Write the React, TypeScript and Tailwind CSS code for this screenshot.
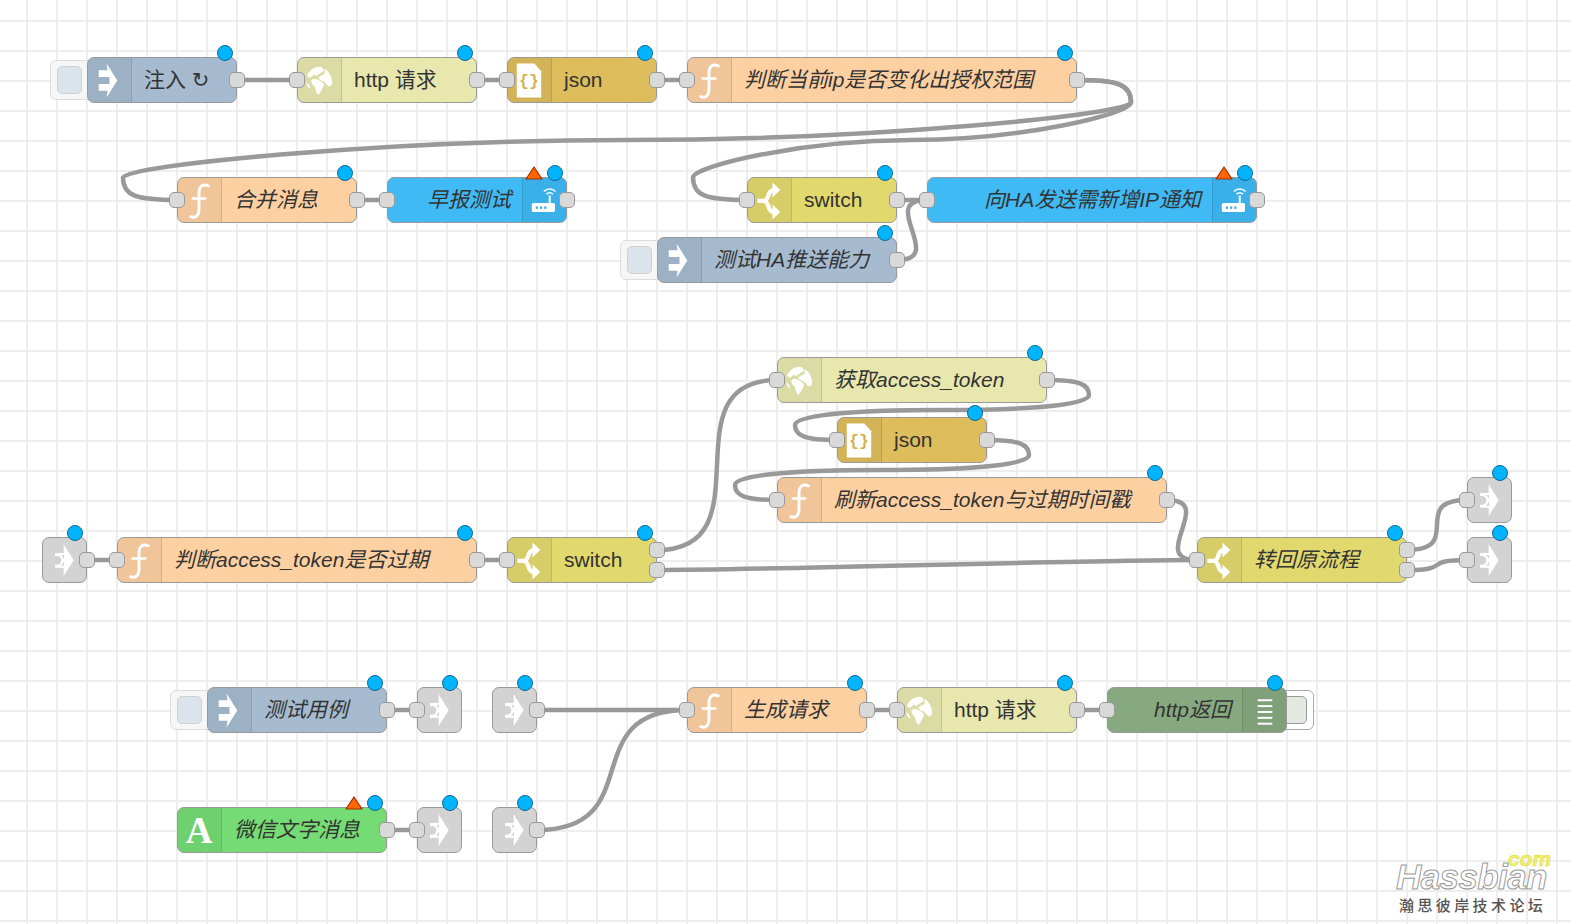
import React from "react";

const FONT = "font-['Liberation_Sans','Noto_Sans_CJK_SC','DejaVu_Sans',sans-serif]";

function wirePath(x1: number, y1: number, x2: number, y2: number) {
  const nw = 150, nh = 45;
  const dy = y2 - y1, dx = x2 - x1;
  const delta = Math.sqrt(dy * dy + dx * dx);
  let scale = 0.75;
  if (dx > 0) {
    if (delta < nw) scale = 0.75 - 0.75 * ((nw - delta) / nw);
    return `M ${x1} ${y1} C ${x1 + nw * scale} ${y1} ${x2 - nw * scale} ${y2} ${x2} ${y2}`;
  }
  scale = 0.4 - 0.2 * Math.max(0, (nw - Math.min(Math.abs(dx), Math.abs(dy))) / nw);
  const midX = Math.floor(x2 - dx / 2);
  const midY = Math.floor(y2 - dy / 2);
  const cp = nh / 2;
  const s = dy > 0 ? 1 : -1;
  const topX = x1 + nw * scale;
  const topY = y1 + s * Math.min(cp, Math.abs(midY - y1) / 2);
  const botX = x2 - nw * scale;
  const botY = y2 - s * Math.min(cp, Math.abs(y2 - midY) / 2);
  const pts = [
    [(x1 + topX) / 2 + (topX - x1) * 0.25, y1],
    [topX, y1 + s * 4],
    [topX, topY],
    [topX, topY + s * Math.min(cp / 2, Math.abs(midY - topY))],
    [(topX + midX) / 2, midY],
    [midX, midY],
    [(botX + midX) / 2, midY],
    [botX, botY - s * Math.min(cp / 2, Math.abs(botY - midY))],
    [botX, botY],
    [botX, y2 - s * 4],
    [(x2 + botX) / 2 + (botX - x2) * 0.25, y2],
    [x2, y2],
  ];
  let d = `M ${x1} ${y1}`;
  for (let i = 0; i < pts.length; i += 3) {
    d += ` C ${pts[i].join(" ")} ${pts[i + 1].join(" ")} ${pts[i + 2].join(" ")}`;
  }
  return d;
}

const WIRES: number[][] = [
  [237, 80, 297, 80],
  [477, 80, 507, 80],
  [657, 80, 687, 80],
  [1077, 80, 177, 200],
  [357, 200, 387, 200],
  [1077, 80, 747, 200],
  [897, 200, 927, 200],
  [897, 260, 927, 200],
  [87, 560, 117, 560],
  [477, 560, 507, 560],
  [657, 550, 777, 380],
  [657, 570, 1197, 560],
  [1047, 380, 837, 440],
  [987, 440, 777, 500],
  [1167, 500, 1197, 560],
  [1407, 550, 1467, 500],
  [1407, 570, 1467, 560],
  [387, 710, 417, 710],
  [537, 710, 687, 710],
  [387, 830, 417, 830],
  [537, 830, 687, 710],
  [867, 710, 897, 710],
  [1077, 710, 1107, 710],
];

const Ico = ({ children, vb = "0 0 45 45" }: { children: React.ReactNode; vb?: string }) => (
  <svg width="45" height="45" viewBox={vb} className="block">
    {children}
  </svg>
);

const InjectIcon = () => (
  <Ico>
    <polygon fill="#fff" points="12,12 21,12 20,5 31,22.5 20,40 21,33 12,33 12,26 23,26 23,19 12,19" />
  </Ico>
);
const FuncIcon = () => (
  <Ico>
    <path d="M14 39 C20 41 22.5 37 22.5 31 L22.5 15 C22.5 8 26 5 32 7.5" fill="none" stroke="#fff" strokeWidth="3" strokeLinecap="round" />
    <path d="M15 20.5 H30" fill="none" stroke="#fff" strokeWidth="2.4" />
  </Ico>
);
const GlobeIcon = () => (
  <Ico vb="6 6 135 135">
    <g fill="#fff" stroke="#fff" strokeWidth="3" strokeLinejoin="round">
      <path d="M38 60 C42 45 58 32 78 33 C84 34 88 38 86 44 C80 46 76 52 70 54 C66 60 62 58 60 54 C54 56 50 60 46 64 Z" />
      <path d="M92 40 C104 48 114 66 112 84 C110 90 104 92 100 88 C94 80 90 74 80 72 C76 70 72 68 74 64 C80 58 90 58 92 52 Z" />
      <path d="M52 72 C60 68 70 72 76 76 C84 80 90 84 86 92 C82 98 78 108 72 116 C66 112 64 100 62 92 C56 88 50 82 52 72 Z" />
      <path d="M36 82 L40 84 L46 96 L42 94 Z" />
    </g>
  </Ico>
);
const SwitchIcon = () => (
  <Ico vb="6 6 135 135">
    <g fill="none" stroke="#fff" strokeWidth="13">
      <path d="M38 75 H56 C68 75 70 64 73 54 C76 44 82 41 94 41" />
      <path d="M56 75 C68 75 70 86 73 96 C76 106 82 109 94 109" />
    </g>
    <polygon fill="#fff" points="84,18 108,41 84,64" />
    <polygon fill="#fff" points="84,86 108,109 84,132" />
  </Ico>
);
const JsonIcon = () => (
  <Ico>
    <polygon fill="#fff" points="10,5 28,5 35,13 35,40 10,40" />
    <text x="22.5" y="28" textAnchor="middle" fontSize="17" fontWeight="700" fill="#d4b04e" fontFamily="'Liberation Mono',monospace">{"{}"}</text>
  </Ico>
);
const RouterIcon = () => (
  <Ico vb="21 36 135 135">
    <rect x="48" y="111" width="71" height="28" rx="5" fill="#fff" />
    <rect x="100" y="88" width="6" height="26" fill="#fff" />
    <g fill="#3fa9e0">
      <rect x="60" y="122" width="7" height="7" />
      <rect x="73" y="122" width="7" height="7" />
      <rect x="86" y="122" width="7" height="7" />
    </g>
    <g fill="none" stroke="#fff" strokeWidth="4.5">
      <path d="M93 84 A14 14 0 0 1 113 84" />
      <path d="M85 76 A25 25 0 0 1 121 76" />
    </g>
  </Ico>
);
const DebugIcon = () => (
  <Ico>
    <g fill="#fff">
      <rect x="15" y="11" width="15" height="2" />
      <rect x="15" y="17" width="15" height="2" />
      <rect x="15" y="23" width="15" height="2" />
      <rect x="15" y="29" width="15" height="2" />
      <rect x="15" y="35" width="15" height="2" />
    </g>
  </Ico>
);
const LinkIcon = () => (
  <Ico vb="6 51 135 135">
    <polygon fill="#fff" points="42,96 68,96 68,70 98,118 68,165 68,140 42,140" />
    <path d="M42 105 H48 A13 13 0 0 1 48 131 H42 Z" fill="#d3d3d3" />
    <path d="M60 102 Q66 106 67 112 L69 112 L69 102 Z" fill="#d3d3d3" />
    <path d="M60 134 Q66 130 67 124 L69 124 L69 134 Z" fill="#d3d3d3" />
  </Ico>
);
const TextIcon = () => (
  <span className="font-['Liberation_Serif',serif] font-bold text-[37px] leading-[45px] text-white block w-[45px] text-center">A</span>
);

type NodeDef = {
  x: number;
  y: number;
  w: number;
  bg: string;
  label?: string;
  italic?: boolean;
  icon: React.ReactNode;
  right?: boolean;
  inPort?: boolean;
  outs?: number[];
  warn?: boolean;
  leftBtn?: boolean;
  rightBtn?: boolean;
};

const INJECT = "bg-[#a6bbcf]";
const HTTP = "bg-[#e7e7ae]";
const JSONC = "bg-[#debd5c]";
const FUNC = "bg-[#fdd0a2]";
const SWITCH = "bg-[#e2d96e]";
const BLUE = "bg-[#3fbaf5]";
const DEBUG = "bg-[#87a980]";
const GREEN = "bg-[#75dc75]";
const LINK = "bg-[#d3d3d3]";

const NODES: NodeDef[] = [
  { x: 87, y: 57, w: 150, bg: INJECT, label: "注入 ↻", icon: <InjectIcon />, outs: [23], leftBtn: true },
  { x: 297, y: 57, w: 180, bg: HTTP, label: "http 请求", icon: <GlobeIcon />, inPort: true, outs: [23] },
  { x: 507, y: 57, w: 150, bg: JSONC, label: "json", icon: <JsonIcon />, inPort: true, outs: [23] },
  { x: 687, y: 57, w: 390, bg: FUNC, label: "判断当前ip是否变化出授权范围", italic: true, icon: <FuncIcon />, inPort: true, outs: [23] },
  { x: 177, y: 177, w: 180, bg: FUNC, label: "合并消息", italic: true, icon: <FuncIcon />, inPort: true, outs: [23] },
  { x: 387, y: 177, w: 180, bg: BLUE, label: "早报测试", italic: true, icon: <RouterIcon />, right: true, inPort: true, outs: [23], warn: true },
  { x: 747, y: 177, w: 150, bg: SWITCH, label: "switch", icon: <SwitchIcon />, inPort: true, outs: [23] },
  { x: 927, y: 177, w: 330, bg: BLUE, label: "向HA发送需新增IP通知", italic: true, icon: <RouterIcon />, right: true, inPort: true, outs: [23], warn: true },
  { x: 657, y: 237, w: 240, bg: INJECT, label: "测试HA推送能力", italic: true, icon: <InjectIcon />, outs: [23], leftBtn: true },
  { x: 777, y: 357, w: 270, bg: HTTP, label: "获取access_token", italic: true, icon: <GlobeIcon />, inPort: true, outs: [23] },
  { x: 837, y: 417, w: 150, bg: JSONC, label: "json", icon: <JsonIcon />, inPort: true, outs: [23] },
  { x: 777, y: 477, w: 390, bg: FUNC, label: "刷新access_token与过期时间戳", italic: true, icon: <FuncIcon />, inPort: true, outs: [23] },
  { x: 42, y: 537, w: 45, bg: LINK, icon: <LinkIcon />, outs: [23] },
  { x: 117, y: 537, w: 360, bg: FUNC, label: "判断access_token是否过期", italic: true, icon: <FuncIcon />, inPort: true, outs: [23] },
  { x: 507, y: 537, w: 150, bg: SWITCH, label: "switch", icon: <SwitchIcon />, inPort: true, outs: [13, 33] },
  { x: 1197, y: 537, w: 210, bg: SWITCH, label: "转回原流程", italic: true, icon: <SwitchIcon />, inPort: true, outs: [13, 33] },
  { x: 1467, y: 477, w: 45, bg: LINK, icon: <LinkIcon />, inPort: true },
  { x: 1467, y: 537, w: 45, bg: LINK, icon: <LinkIcon />, inPort: true },
  { x: 207, y: 687, w: 180, bg: INJECT, label: "测试用例", italic: true, icon: <InjectIcon />, outs: [23], leftBtn: true },
  { x: 417, y: 687, w: 45, bg: LINK, icon: <LinkIcon />, inPort: true },
  { x: 492, y: 687, w: 45, bg: LINK, icon: <LinkIcon />, outs: [23] },
  { x: 687, y: 687, w: 180, bg: FUNC, label: "生成请求", italic: true, icon: <FuncIcon />, inPort: true, outs: [23] },
  { x: 897, y: 687, w: 180, bg: HTTP, label: "http 请求", icon: <GlobeIcon />, inPort: true, outs: [23] },
  { x: 1107, y: 687, w: 180, bg: DEBUG, label: "http返回", italic: true, icon: <DebugIcon />, right: true, inPort: true, rightBtn: true },
  { x: 177, y: 807, w: 210, bg: GREEN, label: "微信文字消息", italic: true, icon: <TextIcon />, outs: [23], warn: true },
  { x: 417, y: 807, w: 45, bg: LINK, icon: <LinkIcon />, inPort: true },
  { x: 492, y: 807, w: 45, bg: LINK, icon: <LinkIcon />, outs: [23] },
];

const Port = ({ cx, cy }: { cx: number; cy: number }) => (
  <div
    className="absolute w-[16px] h-[16px] rounded-[5px] border border-[#999] bg-[#d9d9d9] z-20"
    style={{ left: cx - 8, top: cy - 8 }}
  />
);

function FlowNode({ n }: { n: NodeDef }) {
  const solo = !n.label;
  return (
    <div className="absolute h-[46px]" style={{ left: n.x, top: n.y, width: n.w }}>
      {n.leftBtn && (
        <div className="absolute left-[-37px] top-[3px] w-[45px] h-[40px] rounded-[6px] border border-[#ddd] bg-[#f6f6f6]">
          <div className="absolute left-[6px] top-[5px] w-[25px] h-[28px] rounded-[5px] border border-[#d0d0d0] bg-[#dbe3ec]" />
        </div>
      )}
      {n.rightBtn && (
        <div className="absolute right-[-27px] top-[3px] w-[45px] h-[40px] rounded-[6px] border border-[#aaa] bg-white">
          <div className="absolute right-[6px] top-[5px] w-[30px] h-[28px] rounded-[5px] border border-[#999] bg-[#e3e9e0]" />
        </div>
      )}
      <div className={`relative w-full h-[46px] box-border rounded-[7px] border border-[#999] overflow-hidden flex ${n.bg} ${n.right ? "flex-row-reverse" : ""}`}>
        <div
          className={`shrink-0 w-[45px] flex items-center justify-center ${solo ? "" : "bg-black/5"} ${
            solo ? "" : n.right ? "border-l border-black/10 -mr-px" : "border-r border-black/10 -ml-px"
          }`}
        >
          {n.icon}
        </div>
        {n.label && (
          <div
            className={`flex-1 min-w-0 flex items-center whitespace-nowrap text-[21px] leading-none pb-[2px] text-[#333] ${FONT} ${n.italic ? "italic" : ""} ${
              n.right ? "justify-end pr-[11px]" : "pl-[12px]"
            }`}
          >
            {n.label}
          </div>
        )}
      </div>
      {n.warn && (
        <svg width="18" height="14" viewBox="0 0 18 14" className="absolute top-[-11px] z-30" style={{ right: 24 }}>
          <polygon points="9,1 17,13 1,13" fill="#ff6600" stroke="#a03000" strokeWidth="1.2" strokeLinejoin="round" />
        </svg>
      )}
      <div className="absolute right-[4px] top-[-12px] w-[16px] h-[16px] rounded-full bg-[#00b4ff] border border-[#0a6a94] z-30" />
    </div>
  );
}

export default function App() {
  return (
    <div className="relative w-[1571px] h-[924px] overflow-hidden bg-white bg-[linear-gradient(#eeeeee_2px,transparent_2px),linear-gradient(90deg,#eeeeee_2px,transparent_2px)] bg-[size:30px_30px] bg-[position:26px_20px]">
      <svg width="1571" height="924" className="absolute left-0 top-0">
        {WIRES.map((w, i) => (
          <path key={i} d={wirePath(w[0], w[1], w[2], w[3])} fill="none" stroke="#999" strokeWidth="4.5" />
        ))}
      </svg>
      {NODES.map((n, i) => (
        <FlowNode key={i} n={n} />
      ))}
      {NODES.flatMap((n, i) => [
        ...(n.inPort ? [<Port key={`i${i}`} cx={n.x} cy={n.y + 23} />] : []),
        ...(n.outs ?? []).map((o, j) => <Port key={`o${i}-${j}`} cx={n.x + n.w} cy={n.y + o} />),
      ])}
      <div className="absolute left-[1394px] top-[858px] w-[160px] h-[60px]">
        <span className="absolute left-[2px] top-[1px] font-['Liberation_Sans',sans-serif] italic font-bold text-[35px] leading-[36px] tracking-[-0.6px] text-white [-webkit-text-stroke:1px_#999]">Hassbian</span>
        <span className="absolute left-[114px] top-[-10px] font-['Liberation_Sans',sans-serif] italic font-bold text-[21px] leading-[22px] text-[#f2f26a] [-webkit-text-stroke:0.5px_#d8d840]">com</span>
        <span className="absolute left-[5px] top-[37px] whitespace-nowrap font-['Noto_Sans_CJK_SC',sans-serif] font-medium text-[15px] leading-[20px] tracking-[3.4px] text-[#555]">瀚思彼岸技术论坛</span>
      </div>
    </div>
  );
}
